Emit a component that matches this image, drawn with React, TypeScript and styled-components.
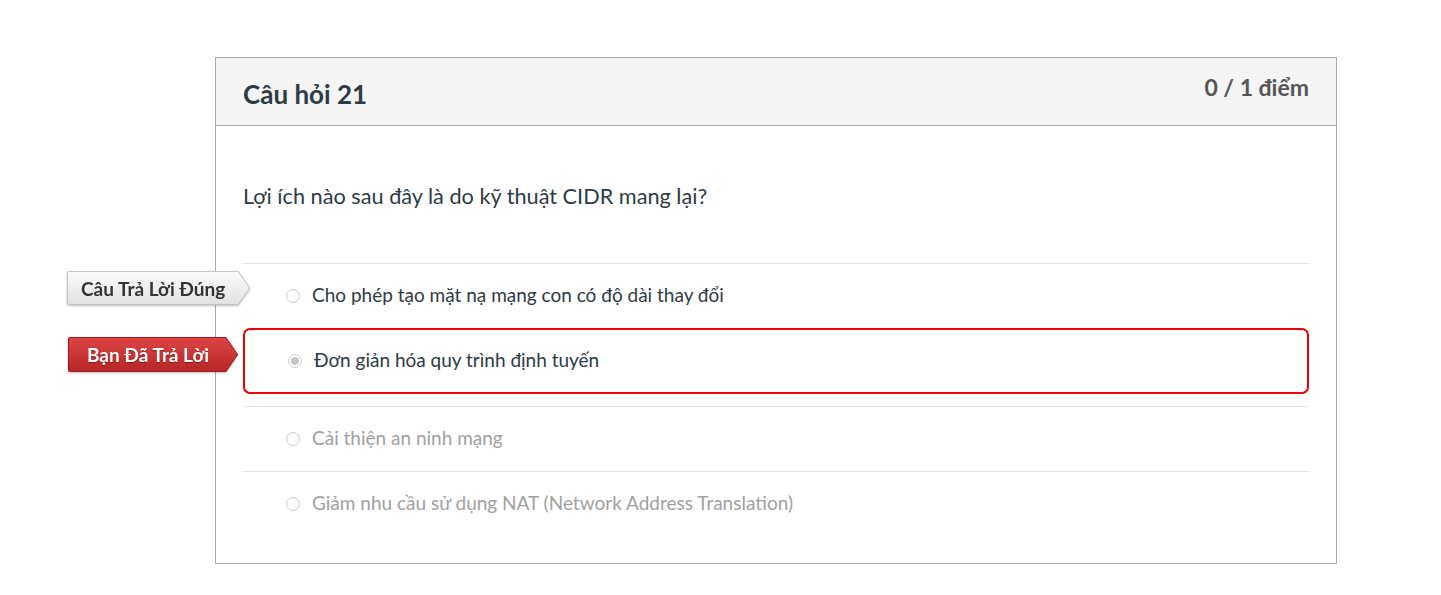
import React from "react";
import styled, { createGlobalStyle } from "styled-components";

const Global = createGlobalStyle`
  html, body { margin: 0; padding: 0; background: #fff; }
  body { font-family: Lato, "Noto Sans", sans-serif; color: #2d3b45; }
  * { box-sizing: border-box; }
`;

const Page = styled.div`
  padding: 57px 0 0 215px;
  width: 1441px;
  height: 595px;
`;

const Card = styled.section`
  width: 1122px;
  border: 1px solid #aaaaaa;
  background: #fff;
`;

const Header = styled.header`
  height: 68px;
  background: #f5f5f5;
  border-bottom: 1px solid #aaaaaa;
  display: flex;
  justify-content: space-between;
  align-items: flex-start;
  padding: 0 27px 0 27px;
`;

const Title = styled.h2`
  margin: 20px 0 0;
  font-size: 26px;
  line-height: 32px;
  font-weight: 700;
  color: #2d3b45;
`;

const Points = styled.div`
  margin-top: 14px;
  font-size: 23px;
  line-height: 30px;
  font-weight: 700;
  color: #555555;
`;

const Body = styled.div`
  padding: 0 27px 27px;
`;

const Question = styled.p`
  margin: 0;
  padding: 55px 0 0;
  height: 137px;
  font-size: 21.7px;
  line-height: 30px;
  color: #2d3b45;
`;

const Answers = styled.div`
  display: flex;
  flex-direction: column;
`;

const Row = styled.div<{ $selected?: boolean }>`
  position: relative;
  ${(p) =>
    p.$selected
      ? `
    height: 66px;
    margin-bottom: 12px;
    border: 2px solid #ee0000;
    border-radius: 7px;
    padding-left: 43px;
  `
      : `
    height: 65px;
    border-top: 1px solid #e3e3e3;
    padding-left: 43px;
  `}
  display: flex;
  align-items: center;
`;

const Radio = styled.span<{ $checked?: boolean }>`
  width: 14px;
  height: 14px;
  border-radius: 50%;
  border: 1px solid #cfcfcf;
  background: #fdfdfd;
  display: flex;
  align-items: center;
  justify-content: center;
  flex: none;
  &::after {
    content: "";
    display: ${(p) => (p.$checked ? "block" : "none")};
    width: 8px;
    height: 8px;
    border-radius: 50%;
    background: #c6c6c6;
  }
`;

const AnswerText = styled.span<{ $muted?: boolean }>`
  margin-left: 12px;
  font-size: 19px;
  line-height: 24px;
  margin-top: -2px;
  color: ${(p) => (p.$muted ? "#a1a1a1" : "#2d3b45")};
`;

const Tag = styled.div<{ $left: number; $top: number }>`
  position: absolute;
  left: ${(p) => p.$left}px;
  top: ${(p) => p.$top}px;
  filter: drop-shadow(0 1px 1px rgba(0, 0, 0, 0.25));
`;

const TagOuter = styled.div<{ $variant: "correct" | "yours" }>`
  padding: 1px;
  background: ${(p) => (p.$variant === "correct" ? "#c4c4c4" : "#a51c1c")};
  clip-path: polygon(0 0, calc(100% - 12px) 0, 100% 50%, calc(100% - 12px) 100%, 0 100%);
  border-radius: 2px;
`;

const TagInner = styled.div<{ $variant: "correct" | "yours" }>`
  height: ${(p) => (p.$variant === "correct" ? "32px" : "33px")};
  padding: ${(p) => (p.$variant === "correct" ? "0 24px 0 13px" : "0 28px 0 18px")};
  display: flex;
  align-items: center;
  font-size: 19px;
  font-weight: 700;
  white-space: nowrap;
  clip-path: polygon(0 0, calc(100% - 11.5px) 0, 100% 50%, calc(100% - 11.5px) 100%, 0 100%);
  ${(p) =>
    p.$variant === "correct"
      ? `
    background: linear-gradient(#fbfbfb, #e2e2e2);
    color: #333333;
  `
      : `
    background: linear-gradient(#dc4444, #b82626);
    color: #ffffff;
    text-shadow: 0 1px 1px rgba(0,0,0,0.35);
  `}
`;

const answers = [
  { text: "Cho phép tạo mặt nạ mạng con có độ dài thay đổi", tag: "correct" as const },
  { text: "Đơn giản hóa quy trình định tuyến", tag: "yours" as const, selected: true },
  { text: "Cải thiện an ninh mạng", muted: true },
  { text: "Giảm nhu cầu sử dụng NAT (Network Address Translation)", muted: true },
];

export default function App() {
  return (
    <>
      <Global />
      <Page>
        <Card>
          <Header>
            <Title>Câu hỏi 21</Title>
            <Points>0 / 1 điểm</Points>
          </Header>
          <Body>
            <Question>Lợi ích nào sau đây là do kỹ thuật CIDR mang lại?</Question>
            <Answers>
              {answers.map((a, i) => (
                <Row key={i} $selected={a.selected}>
                  {a.tag === "correct" && (
                    <Tag $left={-176} $top={7}>
                      <TagOuter $variant="correct">
                        <TagInner $variant="correct">Câu Trả Lời Đúng</TagInner>
                      </TagOuter>
                    </Tag>
                  )}
                  {a.tag === "yours" && (
                    <Tag $left={-177} $top={7}>
                      <TagOuter $variant="yours">
                        <TagInner $variant="yours">Bạn Đã Trả Lời</TagInner>
                      </TagOuter>
                    </Tag>
                  )}
                  <Radio $checked={a.selected} />
                  <AnswerText $muted={a.muted}>{a.text}</AnswerText>
                </Row>
              ))}
            </Answers>
          </Body>
        </Card>
      </Page>
    </>
  );
}
